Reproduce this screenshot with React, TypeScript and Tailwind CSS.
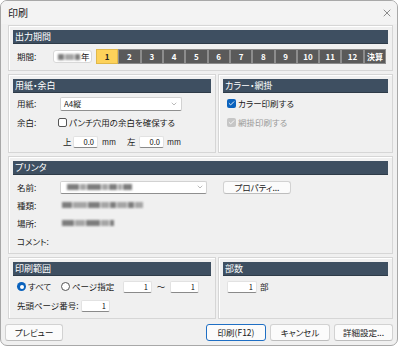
import { X, ChevronDown, Check } from "lucide-react";

const months = ["1", "2", "3", "4", "5", "6", "7", "8", "9", "10", "11", "12", "決算"];

function Panel({
  title,
  className = "",
  children,
}: {
  title: string;
  className?: string;
  children?: React.ReactNode;
}) {
  return (
    <div
      className={`border border-[#d6d6d6] shadow-[inset_1px_1px_0_#ffffff] px-[4px] pt-[4px] ${className}`}
    >
      <div className="h-[14px] bg-[#3e4f61] border-b border-[#2e3b48] pl-[2px] text-[9px] leading-[13px] text-white">
        {title}
      </div>
      {children}
    </div>
  );
}

function Field({ value, className = "" }: { value: string; className?: string }) {
  return (
    <div
      className={`shrink-0 h-[12px] bg-white border border-[#e2e2e2] border-b-[#8a8a8a] rounded-[2px] pr-[3px] text-right text-[7.5px] leading-[10px] text-[#111] ${className}`}
    >
      {value}
    </div>
  );
}

function Blur({ widths }: { widths: number[] }) {
  return (
    <div className="flex items-center gap-[1px] blur-[0.8px]">
      {widths.map((w, i) => (
        <div
          key={i}
          className={`h-[6px] ${i % 2 ? "bg-[#a5a5a5]" : "bg-[#7d7d7d]"}`}
          style={{ width: w }}
        />
      ))}
    </div>
  );
}

function Btn({
  label,
  primary = false,
  className = "",
}: {
  label: string;
  primary?: boolean;
  className?: string;
}) {
  return (
    <div
      className={`shrink-0 h-[17px] flex items-center justify-center rounded-[3px] bg-[#fbfbfb] text-[8.5px] text-[#1a1a1a] whitespace-nowrap ${
        primary
          ? "border-[1.5px] border-[#1f6fc4]"
          : "border border-[#d2d2d2] border-b-[#bdbdbd]"
      } ${className}`}
    >
      {label}
    </div>
  );
}

export default function App() {
  return (
    <div className="w-[400px] h-[346px] bg-white font-['Noto_Sans_CJK_JP','Noto_Sans',sans-serif] [font-feature-settings:'palt'] text-[#1a1a1a] whitespace-nowrap">
      <div className="w-[398px] h-[346px] bg-[#f0f0f0] border border-[#a8a8a8] rounded-[7px] flex flex-col overflow-hidden">
        {/* title bar */}
        <div className="h-[23px] flex items-center justify-between pl-[7px] pr-[4px] bg-[#f3f3f3]">
          <span className="text-[10px]">印刷</span>
          <X size={12} strokeWidth={1} className="text-[#222]" />
        </div>

        <div className="flex flex-col gap-[3px] pl-[7px] pr-[4px] pt-[1px]">
          {/* 出力期間 */}
          <Panel title="出力期間" className="h-[46px]">
            <div className="mt-[5px] h-[15px] flex items-center">
              <span className="shrink-0 w-[40px] pl-[4px] text-[8.5px]">期間:</span>
              <div className="shrink-0 w-[39px] h-[13px] bg-white border border-[#d8d8d8] rounded-[3px] flex items-center pl-[4px] gap-[1px]">
                <Blur widths={[6, 9, 5]} />
                <span className="text-[8.5px] leading-none">年</span>
              </div>
              <div className="ml-[4px] mr-[2px] flex-1 flex h-[15px]">
                {months.map((m, i) => (
                  <div
                    key={m}
                    className={`flex-1 flex items-center justify-center text-[8px] font-bold leading-none border ${
                      i === 0
                        ? "bg-[#fdd25a] border-[#e0b84a] text-[#222]"
                        : "bg-[#5a5a5a] border-[#8c8c8c] text-white"
                    }`}
                  >
                    {m}
                  </div>
                ))}
              </div>
            </div>
          </Panel>

          {/* 用紙・余白 / カラー・網掛 */}
          <div className="flex gap-[2px] h-[79px]">
            <Panel title="用紙・余白" className="w-[208px]">
              <div className="mt-[1px] h-[19px] flex items-center">
                <span className="shrink-0 w-[47px] pl-[4px] text-[8.5px]">用紙:</span>
                <div className="w-[122px] h-[14px] bg-white border border-[#d2d2d2] border-b-[#8f8f8f] rounded-[2px] flex items-center justify-between pl-[3px] pr-[3px]">
                  <span className="text-[8px] leading-none">A4縦</span>
                  <ChevronDown size={8} strokeWidth={1.5} className="text-[#777]" />
                </div>
              </div>
              <div className="h-[19px] flex items-center">
                <span className="shrink-0 w-[45px] pl-[4px] text-[8.5px]">余白:</span>
                <div className="shrink-0 w-[9px] h-[9px] bg-white border border-[#555] rounded-[2px]" />
                <span className="ml-[2px] text-[8.5px]">パンチ穴用の余白を確保する</span>
              </div>
              <div className="h-[19px] flex items-center">
                <span className="shrink-0 ml-[50px] w-[10px] text-[8.5px]">上</span>
                <Field value="0.0" className="w-[25px]" />
                <span className="shrink-0 ml-[4px] w-[25px] text-[7.5px]">mm</span>
                <span className="shrink-0 w-[12px] text-[8.5px]">左</span>
                <Field value="0.0" className="w-[25px]" />
                <span className="ml-[3px] text-[7.5px]">mm</span>
              </div>
            </Panel>
            <Panel title="カラー・網掛" className="flex-1">
              <div className="mt-[1px] h-[19px] flex items-center pl-[4px]">
                <div className="shrink-0 w-[9px] h-[9px] bg-[#0a62bd] rounded-[2px] flex items-center justify-center">
                  <Check size={7} strokeWidth={3} className="text-white" />
                </div>
                <span className="ml-[2px] text-[8.5px]">カラー印刷する</span>
              </div>
              <div className="h-[19px] flex items-center pl-[4px]">
                <div className="shrink-0 w-[9px] h-[9px] bg-[#c6c6c6] rounded-[2px] flex items-center justify-center">
                  <Check size={7} strokeWidth={3} className="text-white" />
                </div>
                <span className="ml-[2px] text-[8.5px] text-[#9a9a9a]">網掛印刷する</span>
              </div>
            </Panel>
          </div>

          {/* プリンタ */}
          <Panel title="プリンタ" className="h-[98px]">
            <div className="mt-[3px] h-[18px] flex items-center">
              <span className="shrink-0 w-[47px] pl-[4px] text-[8.5px]">名前:</span>
              <div className="shrink-0 w-[147px] h-[13px] bg-white border border-[#d2d2d2] border-b-[#8f8f8f] rounded-[2px] flex items-center justify-between pl-[6px] pr-[2px]">
                <Blur widths={[12, 6, 14, 6, 8, 4, 9]} />
                <ChevronDown size={8} strokeWidth={1.5} className="text-[#777]" />
              </div>
              <Btn label="プロパティ..." className="ml-[16px] w-[68px] !h-[13px]" />
            </div>
            <div className="h-[18px] flex items-center">
              <span className="shrink-0 w-[49px] pl-[4px] text-[8.5px]">種類:</span>
              <Blur widths={[10, 14, 12, 8, 6, 10, 6, 8]} />
            </div>
            <div className="h-[18px] flex items-center">
              <span className="shrink-0 w-[49px] pl-[4px] text-[8.5px]">場所:</span>
              <Blur widths={[12, 10, 14, 8, 4]} />
            </div>
            <div className="h-[18px] flex items-center">
              <span className="pl-[4px] text-[8.5px]">コメント:</span>
            </div>
          </Panel>

          {/* 印刷範囲 / 部数 */}
          <div className="flex gap-[2px] h-[62px]">
            <Panel title="印刷範囲" className="w-[208px]">
              <div className="mt-[1px] h-[19px] flex items-center pl-[4px]">
                <div className="shrink-0 w-[9px] h-[9px] rounded-full bg-[#0a62bd] flex items-center justify-center">
                  <div className="w-[4px] h-[4px] rounded-full bg-white" />
                </div>
                <span className="shrink-0 ml-[2px] w-[33px] text-[8.5px]">すべて</span>
                <div className="shrink-0 w-[9px] h-[9px] rounded-full bg-white border border-[#555]" />
                <span className="shrink-0 ml-[2px] w-[51px] text-[8.5px]">ページ指定</span>
                <Field value="1" className="w-[29px]" />
                <span className="shrink-0 w-[18px] text-center text-[8.5px]">～</span>
                <Field value="1" className="w-[29px]" />
              </div>
              <div className="h-[19px] flex items-center pl-[4px]">
                <span className="shrink-0 w-[64px] text-[8.5px]">先頭ページ番号:</span>
                <Field value="1" className="w-[29px]" />
              </div>
            </Panel>
            <Panel title="部数" className="flex-1">
              <div className="mt-[1px] h-[19px] flex items-center pl-[4px]">
                <Field value="1" className="w-[30px]" />
                <span className="ml-[3px] text-[8.5px]">部</span>
              </div>
            </Panel>
          </div>
        </div>

        {/* buttons */}
        <div className="mt-[5px] flex items-center pl-[4px] pr-[4px]">
          <Btn label="プレビュー" className="w-[58px]" />
          <div className="ml-auto flex gap-[4px]">
            <Btn label="印刷(F12)" primary className="w-[60px]" />
            <Btn label="キャンセル" className="w-[60px]" />
            <Btn label="詳細設定..." className="w-[59px]" />
          </div>
        </div>
      </div>
    </div>
  );
}
